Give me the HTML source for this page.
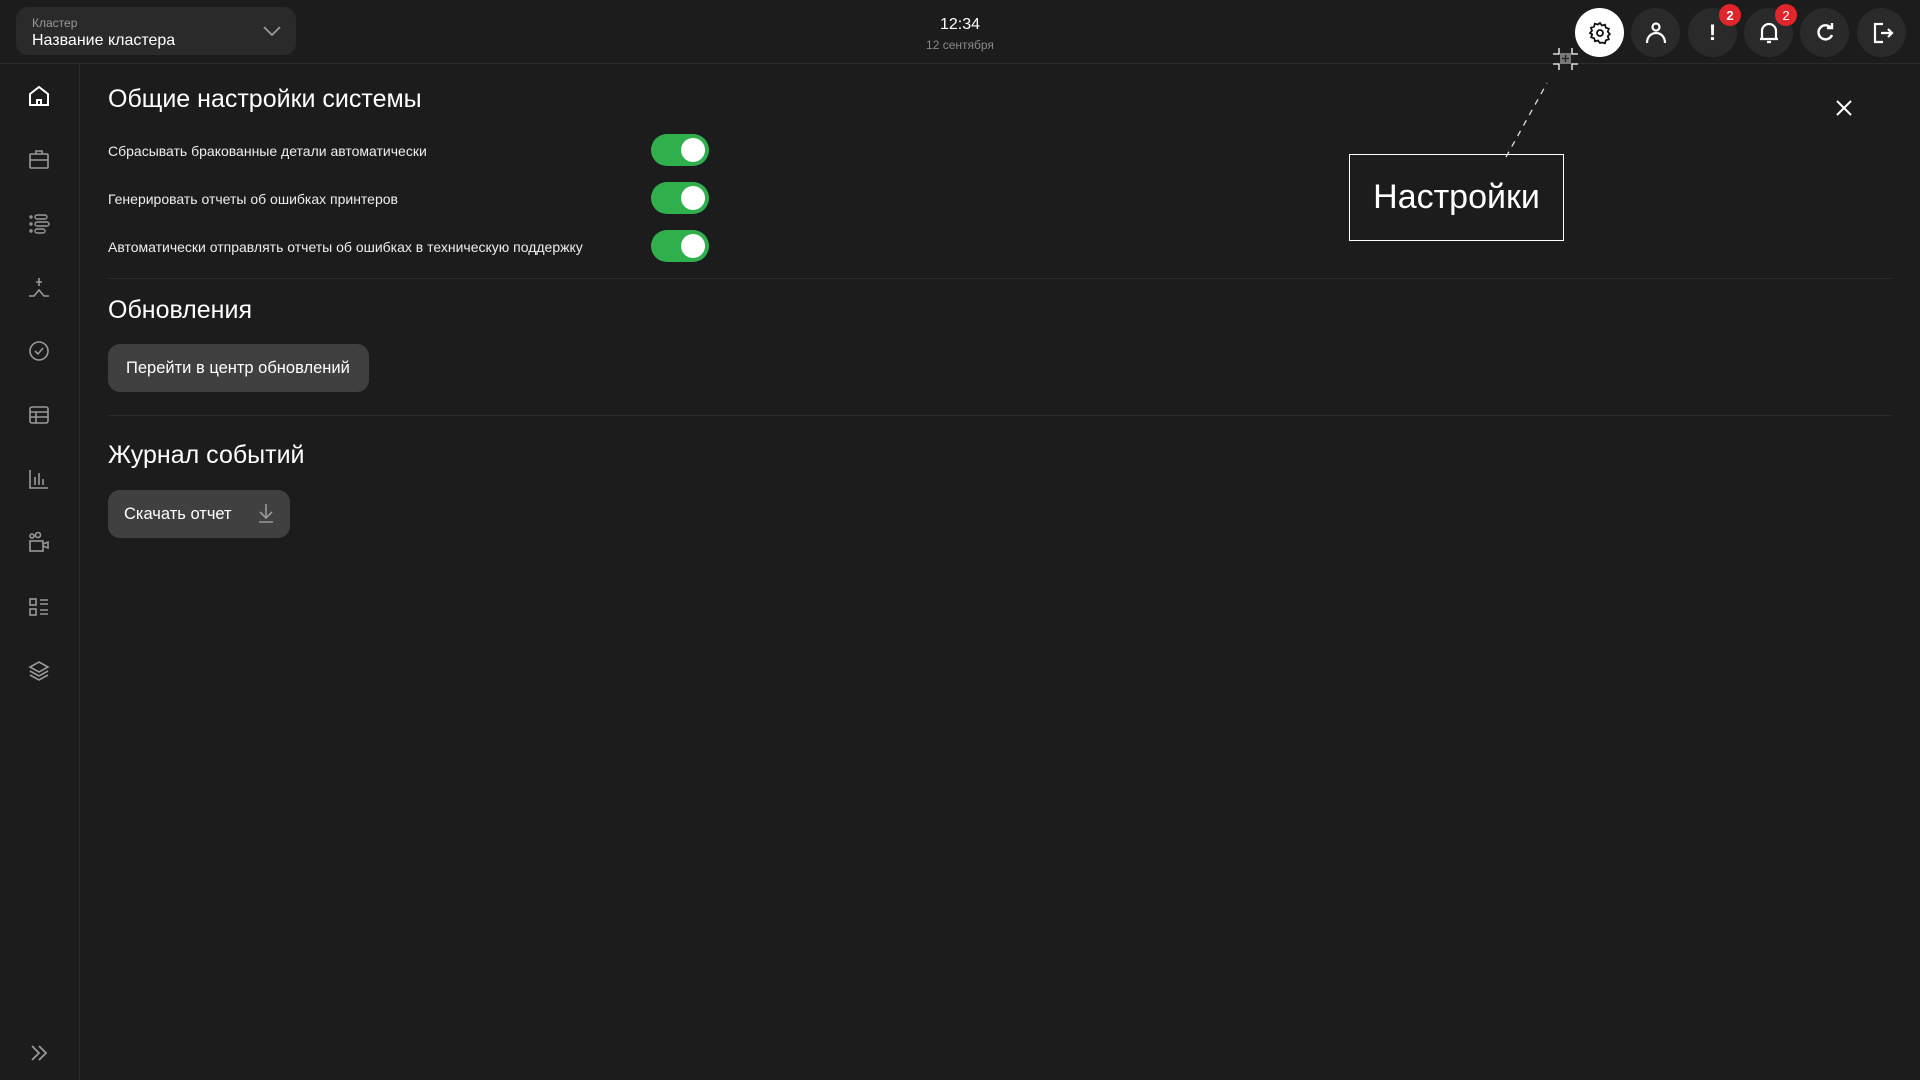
<!DOCTYPE html>
<html><head><meta charset="utf-8"><style>
*{box-sizing:border-box;margin:0;padding:0}
body{width:1920px;height:1080px;background:#1c1c1c;color:#fff;font-family:"Liberation Sans","Noto Sans CJK SC",sans-serif;position:relative;overflow:hidden}
.abs{position:absolute}
.hdr{left:0;top:0;width:1920px;height:64px;border-bottom:1px solid #2c2c2c}
.cl{left:16px;top:7px;width:280px;height:48px;background:#2a2a2a;border-radius:12px}
.side{left:0;top:64px;width:80px;height:1016px;border-right:1px solid #2a2a2a}
.btn{width:49px;height:49px;border-radius:50%;background:#2a2a2a;top:8px;display:flex;align-items:center;justify-content:center}
.badge{position:absolute;top:-4px;right:-4px;width:22px;height:22px;border-radius:50%;background:#e0262b;font-size:13px;display:flex;align-items:center;justify-content:center}
h2{position:absolute;font-weight:normal;font-size:25px;left:108px}
.row{position:absolute;left:108px;font-size:14px;color:#eee}
.tg{position:absolute;left:651px;width:58px;height:32px;border-radius:16px;background:#2fb04c}
.tg:after{content:"";position:absolute;right:4px;top:4px;width:24px;height:24px;border-radius:50%;background:#fff}
.div{position:absolute;left:108px;width:1784px;height:1px;background:#2c2c2c}
.pb{position:absolute;left:108px;height:48px;background:#404040;border-radius:12px;font-size:16.5px;display:flex;align-items:center}
.si{position:absolute;left:27px}
</style></head><body>
<div class="abs hdr"></div>
<div class="abs cl">
 <div class="abs" style="left:16px;top:9px;font-size:12px;color:#999">Кластер</div>
 <div class="abs" style="left:16px;top:25px;font-size:16px">Название кластера</div>
 <svg class="abs" style="left:247px;top:18px" width="18" height="12"><path d="M1 2l8 8 8-8" stroke="#999" stroke-width="1.8" fill="none"/></svg>
</div>
<div class="abs" style="left:0;width:1920px;top:16px;text-align:center;font-size:16px">12:34</div>
<div class="abs" style="left:0;width:1920px;top:38px;text-align:center;font-size:12px;color:#888">12 сентября</div>

<div class="abs btn" style="left:1575px;background:#fff"><svg width="24" height="24" viewBox="0 0 24 24" fill="none" stroke="#111" stroke-width="1.8"><circle cx="12" cy="12" r="3"/><path d="M12 2l2 2.5 3-.8.8 3 3 1-1 3 2 2.3-2 2.3 1 3-3 1-.8 3-3-.8L12 22l-2-2.5-3 .8-.8-3-3-1 1-3L2 12l2-2.3-1-3 3-1 .8-3 3 .8z"/></svg></div>
<div class="abs btn" style="left:1631px"><svg width="26" height="26" viewBox="0 0 26 26" fill="none" stroke="#fff" stroke-width="2.2"><circle cx="13" cy="7" r="3.5"/><path d="M4 23c0-6 4-10 9-10s9 4 9 10"/></svg></div>
<div class="abs btn" style="left:1688px;font-size:22px;font-weight:bold">!<div class="badge">2</div></div>
<div class="abs btn" style="left:1744px"><svg width="24" height="26" viewBox="0 0 24 26" fill="none" stroke="#fff" stroke-width="2.2"><path d="M5 19V11a7 7 0 0114 0v8M3 19h18M10 22h4"/></svg><div class="badge">2</div></div>
<div class="abs btn" style="left:1800px"><svg width="22" height="22" viewBox="0 0 22 22" fill="none" stroke="#fff" stroke-width="2.4"><path d="M17 6A7 7 0 1018 13"/><path d="M13 6h5V1" /></svg></div>
<div class="abs btn" style="left:1857px"><svg width="26" height="26" viewBox="0 0 26 26" fill="none" stroke="#fff" stroke-width="2.2"><path d="M14 4H6v18h8M12 13h11M19 9l4 4-4 4"/></svg></div>

<div class="abs side"></div>
<svg class="si" style="top:84px" width="24" height="24" viewBox="0 0 24 24" fill="none" stroke="#fff" stroke-width="2"><path d="M3 10l9-7 9 7v11H3z M10 21v-5h4v5"/></svg>
<svg class="si" style="top:148px" width="24" height="24" viewBox="0 0 24 24" fill="none" stroke="#999" stroke-width="1.6"><rect x="3" y="6" width="18" height="14" rx="1"/><path d="M9 6V3h6v3M3 12h18"/></svg>
<svg class="si" style="top:212px" width="24" height="24" viewBox="0 0 24 24" fill="none" stroke="#999" stroke-width="1.4"><circle cx="4" cy="5" r="1"/><circle cx="4" cy="12" r="1"/><circle cx="4" cy="19" r="1"/><rect x="8" y="3" width="12" height="4" rx="2"/><rect x="8" y="10" width="14" height="4" rx="2"/><rect x="8" y="17" width="10" height="4" rx="2"/></svg>
<svg class="si" style="top:276px" width="24" height="24" viewBox="0 0 24 24" fill="none" stroke="#999" stroke-width="1.6"><path d="M12 2v8M9 6h6M2 20h5l5-6 5 6h5"/></svg>
<svg class="si" style="top:339px" width="24" height="24" viewBox="0 0 24 24" fill="none" stroke="#999" stroke-width="1.6"><circle cx="12" cy="12" r="9"/><path d="M8 12l3 3 5-6"/></svg>
<svg class="si" style="top:403px" width="24" height="24" viewBox="0 0 24 24" fill="none" stroke="#999" stroke-width="1.6"><rect x="3" y="4" width="18" height="16" rx="2"/><path d="M3 9h18M3 14h18M9 9v11"/></svg>
<svg class="si" style="top:467px" width="24" height="24" viewBox="0 0 24 24" fill="none" stroke="#999" stroke-width="1.6"><path d="M3 3v18h18M8 10v8M12 6v12M16 12v6"/></svg>
<svg class="si" style="top:531px" width="24" height="24" viewBox="0 0 24 24" fill="none" stroke="#999" stroke-width="1.6"><circle cx="5" cy="5" r="2"/><circle cx="11" cy="4" r="2.5"/><rect x="3" y="10" width="13" height="10"/><path d="M16 13l5-2v6l-5-2"/></svg>
<svg class="si" style="top:595px" width="24" height="24" viewBox="0 0 24 24" fill="none" stroke="#999" stroke-width="1.6"><rect x="3" y="4" width="6" height="6"/><rect x="3" y="14" width="6" height="6"/><path d="M13 5h8M13 9h8M13 15h8M13 19h8"/></svg>
<svg class="si" style="top:659px" width="24" height="24" viewBox="0 0 24 24" fill="none" stroke="#999" stroke-width="1.6"><path d="M12 3l9 5-9 5-9-5z M3 12l9 5 9-5M3 16l9 5 9-5"/></svg>
<svg class="si" style="top:1041px" width="24" height="24" viewBox="0 0 24 24" fill="none" stroke="#999" stroke-width="1.8"><path d="M5 5l7 7-7 7M12 5l7 7-7 7"/></svg>

<h2 style="top:85px">Общие настройки системы</h2>
<div class="row" style="top:143px">Сбрасывать бракованные детали автоматически</div>
<div class="row" style="top:191px">Генерировать отчеты об ошибках принтеров</div>
<div class="row" style="top:239px">Автоматически отправлять отчеты об ошибках в техническую поддержку</div>
<div class="tg" style="top:134px"></div>
<div class="tg" style="top:182px"></div>
<div class="tg" style="top:230px"></div>
<div class="div" style="top:278px"></div>
<h2 style="top:296px">Обновления</h2>
<div class="pb" style="top:344px;width:261px;padding-left:18px">Перейти в центр обновлений</div>
<div class="div" style="top:415px"></div>
<h2 style="top:441px">Журнал событий</h2>
<div class="pb" style="top:490px;width:182px;padding-left:16px">Скачать отчет
<svg class="abs" style="left:148px;top:12px" width="20" height="22" viewBox="0 0 20 22" fill="none" stroke="#999" stroke-width="1.6"><path d="M10 2v14M4 10l6 6 6-6M3 20h14"/></svg></div>

<svg class="abs" style="left:1832px;top:96px" width="24" height="24" viewBox="0 0 24 24" stroke="#fff" stroke-width="2"><path d="M5 5l14 14M19 5L5 19"/></svg>
<div class="abs" style="left:1349px;top:154px;width:215px;height:87px;border:1.5px solid #fff;display:flex;align-items:center;justify-content:center;font-size:34px">Настройки</div>
<svg class="abs" style="left:1500px;top:45px" width="90" height="120"><path d="M6 112L47 38" stroke="#ddd" stroke-width="1.3" stroke-dasharray="6 6"/><rect x="60" y="8" width="11" height="11" fill="#777"/><path d="M65.5 10v7M62 13.5h7" stroke="#222" stroke-width="1.3"/><path d="M53 9h6V3M78 9h-6V3M53 19h6v6M78 19h-6v6" stroke="#fff" stroke-width="1.3" fill="none"/></svg>
</body></html>
